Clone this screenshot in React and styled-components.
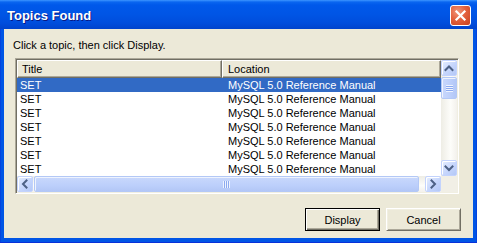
import styled, { createGlobalStyle } from "styled-components";

const GlobalStyle = createGlobalStyle`
  html, body {
    margin: 0;
    padding: 0;
    background: #ffffff;
  }
  body {
    font-family: "Liberation Sans", Arial, sans-serif;
    font-size: 11px;
  }
`;

const rows = [
  { title: "SET", location: "MySQL 5.0 Reference Manual" },
  { title: "SET", location: "MySQL 5.0 Reference Manual" },
  { title: "SET", location: "MySQL 5.0 Reference Manual" },
  { title: "SET", location: "MySQL 5.0 Reference Manual" },
  { title: "SET", location: "MySQL 5.0 Reference Manual" },
  { title: "SET", location: "MySQL 5.0 Reference Manual" },
  { title: "SET", location: "MySQL 5.0 Reference Manual" },
];

// 화살표 모양 (위/아래/왼쪽/오른쪽)
const arrowPaths = {
  up: "M4.5 10 L8 6.5 L11.5 10",
  down: "M4.5 6.5 L8 10 L11.5 6.5",
  left: "M9.5 4.5 L6 8 L9.5 11.5",
  right: "M6.5 4.5 L10 8 L6.5 11.5",
};

function Arrow({ dir }) {
  return (
    <svg width="14" height="14" viewBox="1 1 14 14">
      <path
        d={arrowPaths[dir]}
        fill="none"
        stroke="#4D6185"
        strokeWidth="2"
        strokeLinecap="square"
      />
    </svg>
  );
}

function App() {
  return (
    <>
      <GlobalStyle />
      <Frame>
        <TitleBar>
          <TitleText>Topics Found</TitleText>
          <CloseButton>
            <svg width="13" height="13" viewBox="0 0 13 13">
              <path
                d="M2.5 2.5 L10.5 10.5 M10.5 2.5 L2.5 10.5"
                stroke="#ffffff"
                strokeWidth="2.2"
                strokeLinecap="square"
              />
            </svg>
          </CloseButton>
        </TitleBar>
        <Client>
          <Hint>Click a topic, then click Display.</Hint>
          <ListView>
            <ListBody>
              <Header>
                <HeaderCell $width="205px">Title</HeaderCell>
                <HeaderCell>Location</HeaderCell>
              </Header>
              {rows.map((row, i) => (
                <Row key={i} $selected={i === 0}>
                  <Cell $width="205px">{row.title}</Cell>
                  <Cell>{row.location}</Cell>
                </Row>
              ))}
            </ListBody>
            <VScroll>
              <ScrollButton>
                <Arrow dir="up" />
              </ScrollButton>
              <VThumb>
                <GripV />
              </VThumb>
              <Spacer />
              <ScrollButton>
                <Arrow dir="down" />
              </ScrollButton>
            </VScroll>
            <HScroll>
              <ScrollButton>
                <Arrow dir="left" />
              </ScrollButton>
              <HThumb>
                <GripH />
              </HThumb>
              <ScrollButton>
                <Arrow dir="right" />
              </ScrollButton>
            </HScroll>
            <Corner />
          </ListView>
          <Buttons>
            <PushButton $default>Display</PushButton>
            <PushButton>Cancel</PushButton>
          </Buttons>
        </Client>
      </Frame>
    </>
  );
}

export default App;

const Frame = styled.div`
  width: 477px;
  height: 243px;
  box-sizing: border-box;
  display: flex;
  flex-direction: column;
  background: linear-gradient(to right, #0831d9 0, #0055e5 1px, #0055e5 calc(100% - 1px), #0831d9 100%);
  padding: 0 4px 4px 4px;
  border-bottom: 1px solid #0831d9;
`;

const TitleBar = styled.div`
  height: 29px;
  margin: 0 -4px;
  padding: 0 6px 0 7px;
  display: flex;
  align-items: center;
  justify-content: space-between;
  background: linear-gradient(
    to bottom,
    #3d95ff 0,
    #0a66f0 2px,
    #0058ea 5px,
    #0055e5 50%,
    #004ddc 80%,
    #0043cc 100%
  );
`;

const TitleText = styled.span`
  color: #ffffff;
  font-family: "Liberation Sans", Arial, sans-serif;
  font-weight: bold;
  font-size: 13px;
  text-shadow: 1px 1px 0 #0a1883;
  margin-top: 1px;
`;

const CloseButton = styled.div`
  width: 21px;
  height: 21px;
  box-sizing: border-box;
  border: 1px solid #ffffff;
  border-radius: 3px;
  display: flex;
  align-items: center;
  justify-content: center;
  background: radial-gradient(circle at 35% 30%, #f0957a 0, #e3613e 45%, #c8401d 100%);
  margin-top: 1px;
`;

const Client = styled.div`
  flex: 1;
  background: #ece9d8;
  display: flex;
  flex-direction: column;
  padding: 10px 12px 7px 11px;
`;

const Hint = styled.div`
  color: #000000;
  font-size: 11px;
  line-height: 13px;
  margin-left: -2px;
  margin-bottom: 6px;
  padding-left: 0;
`;

const ListView = styled.div`
  width: 444px;
  height: 136px;
  box-sizing: border-box;
  border: 1px solid;
  border-color: #aca899 #ffffff #ffffff #aca899;
  box-shadow: inset 1px 1px 0 #716f64, inset -1px -1px 0 #f1efe2;
  padding: 1px;
  display: grid;
  grid-template-columns: 1fr 16px;
  grid-template-rows: 1fr 16px;
  background: #ffffff;
`;

const ListBody = styled.div`
  overflow: hidden;
  background: #ffffff;
`;

const Header = styled.div`
  display: flex;
  height: 18px;
`;

const HeaderCell = styled.div`
  box-sizing: border-box;
  ${(p) => (p.$width ? `width: ${p.$width};` : "flex: 1;")}
  height: 18px;
  line-height: 16px;
  padding-left: 4px;
  background: #ece9d8;
  border: 1px solid;
  border-color: #ffffff #716f64 #716f64 #ffffff;
  box-shadow: inset -1px -1px 0 #aca899;
  color: #000000;
  font-size: 11px;
  & + & {
    padding-left: 5px;
  }
`;

const Row = styled.div`
  display: flex;
  height: 14px;
  line-height: 14px;
  background: ${(p) => (p.$selected ? "#316ac5" : "#ffffff")};
  color: ${(p) => (p.$selected ? "#ffffff" : "#000000")};
`;

const Cell = styled.div`
  box-sizing: border-box;
  ${(p) => (p.$width ? `width: ${p.$width};` : "flex: 1;")}
  padding-left: 3px;
  white-space: nowrap;
  & + & {
    padding-left: 6px;
  }
`;

const VScroll = styled.div`
  display: flex;
  flex-direction: column;
  background: linear-gradient(to right, #eeede5, #fdfdfa 60%, #f3f1ec);
`;

const HScroll = styled.div`
  display: flex;
  background: linear-gradient(to bottom, #eeede5, #fdfdfa 60%, #f3f1ec);
`;

const Corner = styled.div`
  background: #f1efe6;
`;

const ScrollButton = styled.div`
  width: 16px;
  height: 16px;
  box-sizing: border-box;
  flex-shrink: 0;
  border: 1px solid #c3d3fd;
  border-radius: 2px;
  background: linear-gradient(135deg, #e6eefe 0, #c6d6fc 55%, #b4c8f7 100%);
  box-shadow: inset 1px 1px 0 #ffffff;
  display: flex;
  align-items: center;
  justify-content: center;
`;

const Spacer = styled.div`
  flex: 1;
`;

const VThumb = styled.div`
  height: 22px;
  margin-top: 1px;
  box-sizing: border-box;
  border: 1px solid #b3c8f6;
  border-radius: 2px;
  background: linear-gradient(to right, #c9d8fc, #bccffb 60%, #b3c7f6);
  box-shadow: inset 1px 1px 0 #eef3fe;
  display: flex;
  align-items: center;
  justify-content: center;
`;

const HThumb = styled.div`
  flex: 1;
  margin: 0 6px 0 1px;
  box-sizing: border-box;
  border: 1px solid #b3c8f6;
  border-radius: 2px;
  background: linear-gradient(to bottom, #c9d8fc, #bccffb 60%, #b3c7f6);
  box-shadow: inset 1px 1px 0 #eef3fe;
  display: flex;
  align-items: center;
  justify-content: center;
`;

const GripV = styled.div`
  width: 7px;
  height: 7px;
  background: repeating-linear-gradient(
    to bottom,
    #eef3fe 0,
    #eef3fe 1px,
    #8caaf0 1px,
    #8caaf0 2px
  );
`;

const GripH = styled.div`
  width: 7px;
  height: 7px;
  background: repeating-linear-gradient(
    to right,
    #eef3fe 0,
    #eef3fe 1px,
    #8caaf0 1px,
    #8caaf0 2px
  );
`;

const Buttons = styled.div`
  margin-top: auto;
  display: flex;
  justify-content: flex-end;
  gap: 6px;
`;

const PushButton = styled.div`
  width: 75px;
  height: 23px;
  box-sizing: border-box;
  display: flex;
  align-items: center;
  justify-content: center;
  background: #ece9d8;
  color: #000000;
  font-size: 11px;
  border: 1px solid;
  border-color: ${(p) =>
    p.$default ? "#000000" : "#ffffff #716f64 #716f64 #ffffff"};
  box-shadow: ${(p) =>
    p.$default
      ? "inset 1px 1px 0 #ffffff, inset -1px -1px 0 #716f64, inset -2px -2px 0 #aca899"
      : "inset 1px 1px 0 #f1efe2, inset -1px -1px 0 #aca899"};
`;
